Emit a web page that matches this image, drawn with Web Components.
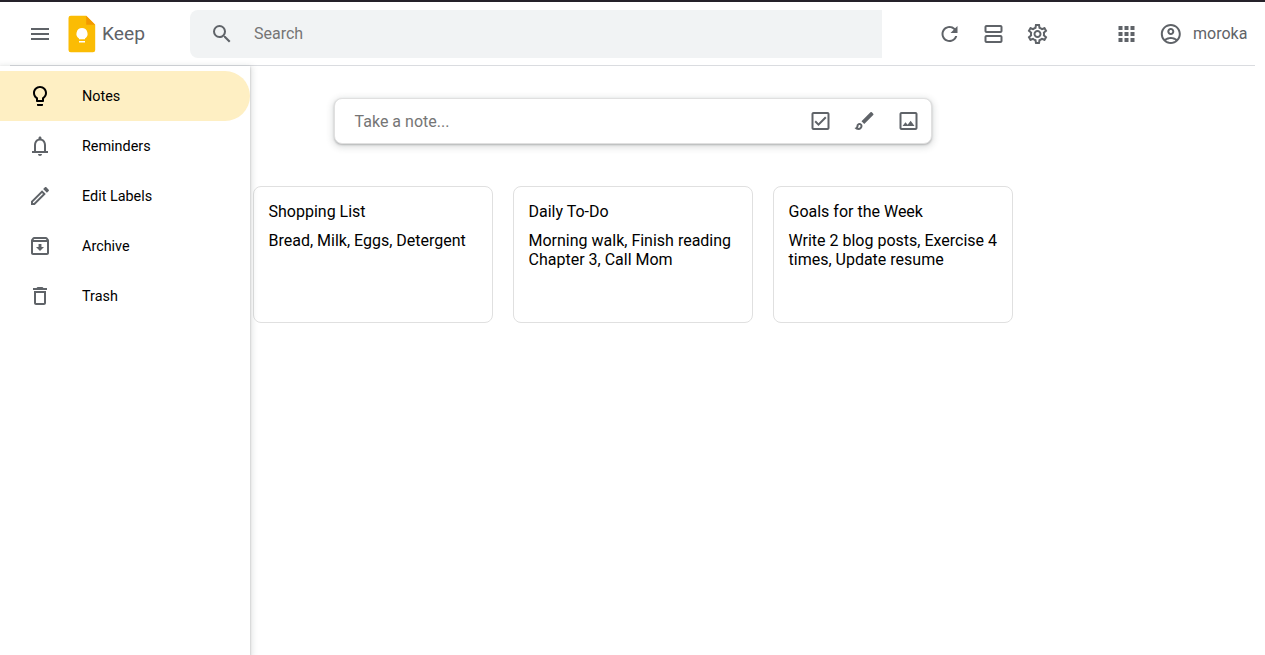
<!DOCTYPE html>
<html lang="en">
<head>
<meta charset="utf-8">
<title>Keep</title>
<style>
html,body{margin:0;height:100%;overflow:hidden;background:#fff;font-family:Roboto,sans-serif;color:#000}
</style>
</head>
<body>
<keep-app></keep-app>
<script>
const box = 'M19 3H5c-1.1 0-2 .9-2 2v14c0 1.1.9 2 2 2h14c1.1 0 2-.9 2-2V5c0-1.1-.9-2-2-2zm0 16H5V5h14v14z';
const ICONS = {
  menu: 'M3 18h18v-2H3v2zm0-5h18v-2H3v2zm0-7v2h18V6H3z',
  search: 'M15.5 14h-.79l-.28-.27A6.47 6.47 0 0 0 16 9.5 6.5 6.5 0 1 0 9.5 16c1.61 0 3.09-.59 4.23-1.57l.27.28v.79l5 4.99L20.49 19l-4.99-5zm-6 0C7.01 14 5 11.99 5 9.5S7.01 5 9.5 5 14 7.01 14 9.5 11.99 14 9.5 14z',
  refresh: 'M17.65 6.35A7.958 7.958 0 0 0 12 4c-4.42 0-7.99 3.58-7.99 8s3.57 8 7.99 8c3.73 0 6.84-2.55 7.73-6h-2.08A5.99 5.99 0 0 1 12 18c-3.31 0-6-2.69-6-6s2.69-6 6-6c1.66 0 3.14.69 4.22 1.78L13 11h7V4l-2.35 2.35z',
  agenda: 'M19 13H5c-1.1 0-2 .9-2 2v4c0 1.1.9 2 2 2h14c1.1 0 2-.9 2-2v-4c0-1.1-.9-2-2-2zm0 6H5v-4h14v4zm0-16H5c-1.1 0-2 .9-2 2v4c0 1.1.9 2 2 2h14c1.1 0 2-.9 2-2V5c0-1.1-.9-2-2-2zm0 6H5V5h14v4z',
  settings: 'M19.43 12.98c.04-.32.07-.64.07-.98 0-.34-.03-.66-.07-.98l2.11-1.65c.19-.15.24-.42.12-.64l-2-3.46c-.09-.16-.26-.25-.44-.25-.06 0-.12.01-.17.03l-2.49 1c-.52-.4-1.08-.73-1.69-.98l-.38-2.65C14.46 2.18 14.25 2 14 2h-4c-.25 0-.46.18-.49.42l-.38 2.65c-.61.25-1.17.59-1.69.98l-2.49-1c-.06-.02-.12-.03-.18-.03-.17 0-.34.09-.43.25l-2 3.46c-.13.22-.07.49.12.64l2.11 1.65c-.04.32-.07.65-.07.98 0 .33.03.66.07.98l-2.11 1.65c-.19.15-.24.42-.12.64l2 3.46c.09.16.26.25.44.25.06 0 .12-.01.17-.03l2.49-1c.52.4 1.08.73 1.69.98l.38 2.65c.03.24.24.42.49.42h4c.25 0 .46-.18.49-.42l.38-2.65c.61-.25 1.17-.59 1.69-.98l2.49 1c.06.02.12.03.18.03.17 0 .34-.09.43-.25l2-3.46c.12-.22.07-.49-.12-.64l-2.11-1.65zm-1.98-1.71c.04.31.05.52.05.73 0 .21-.02.43-.05.73l-.14 1.13.89.7 1.08.84-.7 1.21-1.27-.51-1.04-.42-.9.68c-.43.32-.84.56-1.25.73l-1.06.43-.16 1.13-.2 1.35h-1.4l-.19-1.35-.16-1.13-1.06-.43c-.43-.18-.83-.41-1.23-.71l-.91-.7-1.06.43-1.27.51-.7-1.21 1.08-.84.89-.7-.14-1.13c-.03-.31-.05-.54-.05-.74s.02-.43.05-.73l.14-1.13-.89-.7-1.08-.84.7-1.21 1.27.51 1.04.42.9-.68c.43-.32.84-.56 1.25-.73l1.06-.43.16-1.13.2-1.35h1.39l.19 1.35.16 1.13 1.06.43c.43.18.83.41 1.23.71l.91.7 1.06-.43 1.27-.51.7 1.21-1.07.85-.89.7.14 1.13zM12 8c-2.21 0-4 1.79-4 4s1.79 4 4 4 4-1.79 4-4-1.79-4-4-4zm0 6c-1.1 0-2-.9-2-2s.9-2 2-2 2 .9 2 2-.9 2-2 2z',
  apps: 'M4 8h4V4H4v4zm6 12h4v-4h-4v4zm-6 0h4v-4H4v4zm0-6h4v-4H4v4zm6 0h4v-4h-4v4zm6-10v4h4V4h-4zm-6 4h4V4h-4v4zm6 6h4v-4h-4v4zm0 6h4v-4h-4v4z',
  account: 'M12 2C6.48 2 2 6.48 2 12s4.48 10 10 10 10-4.48 10-10S17.52 2 12 2zM7.35 18.5C8.66 17.56 10.26 17 12 17s3.34.56 4.65 1.5C15.34 19.44 13.74 20 12 20s-3.34-.56-4.65-1.5zm10.79-1.38C16.45 15.8 14.32 15 12 15s-4.45.8-6.14 2.12A7.96 7.96 0 0 1 4 12c0-4.42 3.58-8 8-8s8 3.58 8 8c0 1.95-.7 3.73-1.86 5.12zM12 6c-1.93 0-3.5 1.57-3.5 3.5S10.07 13 12 13s3.5-1.57 3.5-3.5S13.93 6 12 6zm0 5c-.83 0-1.5-.67-1.5-1.5S11.17 8 12 8s1.5.67 1.5 1.5S12.83 11 12 11z',
  bulb: 'M9 21c0 .5.4 1 1 1h4c.6 0 1-.5 1-1v-1H9v1zm3-19C8.1 2 5 5.1 5 9c0 2.4 1.2 4.5 3 5.7V17c0 .5.4 1 1 1h6c.6 0 1-.5 1-1v-2.3c1.8-1.3 3-3.4 3-5.7 0-3.9-3.1-7-7-7zm2.9 11.1l-.9.6V16h-4v-2.3l-.9-.6C7.8 12.2 7 10.6 7 9c0-2.8 2.2-5 5-5s5 2.2 5 5c0 1.6-.8 3.2-2.1 4.1z',
  bell: 'M18 17v-6c0-3.07-1.63-5.64-4.5-6.32V4c0-.83-.67-1.5-1.5-1.5s-1.5.67-1.5 1.5v.68C7.64 5.36 6 7.92 6 11v6H4v2h16v-2h-2zm-2 0H8v-6c0-2.48 1.51-4.5 4-4.5s4 2.02 4 4.5v6zm-4 5c1.1 0 2-.9 2-2h-4c0 1.1.9 2 2 2z',
  pencil: 'M14.06 9.02l.92.92L5.92 19H5v-.92l9.06-9.06M17.66 3c-.25 0-.51.1-.7.29l-1.83 1.83 3.75 3.75 1.83-1.83c.39-.39.39-1.02 0-1.41l-2.34-2.34c-.2-.2-.45-.29-.71-.29zm-3.6 3.19L3 17.25V21h3.75L17.81 9.94l-3.75-3.75z',
  archive: 'M20.54 5.23l-1.39-1.68C18.88 3.21 18.47 3 18 3H6c-.47 0-.88.21-1.16.55L3.46 5.23C3.17 5.57 3 6.02 3 6.5V19c0 1.1.89 2 2 2h14c1.1 0 2-.9 2-2V6.5c0-.48-.17-.93-.46-1.27zM6.24 5h11.52l.83 1H5.42l.82-1zM5 19V8h14v11H5zm8.45-9h-2.9v3H8l4 4 4-4h-2.55z',
  trash: 'M6 19c0 1.1.9 2 2 2h8c1.1 0 2-.9 2-2V7H6v12zM8 9h8v10H8V9zm7.5-5l-1-1h-5l-1 1H5v2h14V4z',
  check: box + 'M17.99 9l-1.41-1.42-6.59 6.59-2.58-2.57-1.42 1.41 4 3.99z',
  brush: 'M20.71 4.63l-1.34-1.34a1 1 0 0 0-1.41 0L9 12.25 11.75 15l8.96-8.96a1 1 0 0 0 0-1.41zM7 14c-1.66 0-3 1.34-3 3 0 1.31-1.16 2-2 2 .92 1.22 2.49 2 4 2 2.21 0 4-1.79 4-4 0-1.66-1.34-3-3-3zm-1 5c-.17 0-.33-.02-.5-.05.31-.55.5-1.21.5-1.95 0-.55.45-1 1-1s1 .45 1 1c0 1.1-.9 2-2 2z',
  image: box + 'M14.14 11.86l-3 3.87L9 13.14 6 17h12z'
};

function define(name, html) {
  customElements.define(name, class extends HTMLElement {
    constructor() {
      super();
      const t = document.createElement('template');
      t.innerHTML = html;
      this.attachShadow({mode: 'open'}).append(t.content.cloneNode(true));
    }
  });
}

/* nudge: optional sub-pixel horizontal shift of the glyph inside its box */
customElements.define('keep-icon', class extends HTMLElement {
  connectedCallback() {
    if (this.shadowRoot) return;
    this.attachShadow({mode: 'open'}).innerHTML =
      `<style>:host{display:block;flex:none;width:24px;height:24px;color:#5f6368}svg{display:block}</style>
       <svg width="24" height="24" viewBox="0 0 24 24" fill="currentColor"><path transform="translate(${this.getAttribute('nudge') || 0} 0)" d="${ICONS[this.getAttribute('name')]}"/></svg>`;
  }
});

define('keep-logo', `<style>
:host{display:flex;align-items:center;color:#5f6368;font-size:19.2px}
svg{display:block;margin-right:6px}
</style>
<svg width="28" height="38" viewBox="0 0 28 38">
<path fill="#fbbc04" d="M2.8.8H18.2L27.2 9.8V35a2.3 2.3 0 0 1-2.3 2.3H2.8A2.3 2.3 0 0 1 .5 35V3.1A2.3 2.3 0 0 1 2.8.8z"/>
<path fill="#f29900" d="M18.2.8l9 9h-9z"/>
<path fill="#fff" d="M14 13.1a5.6 5.6 0 0 0-3 10.3v.9h6v-.9a5.6 5.6 0 0 0-3-10.3zM11 25.9h6v1.7h-6z"/>
</svg><slot></slot>`);

define('keep-search', `<style>
:host{display:flex;align-items:center;box-sizing:border-box;width:692px;height:48px;padding-left:20px;gap:20px;background:#f1f3f4;border-radius:8px 0 0 8px;font-size:16px;color:#757575}
</style><keep-icon name="search"></keep-icon><slot></slot>`);

define('keep-header', `<style>
:host{display:flex;align-items:center;box-sizing:border-box;height:64px;margin:0 10px;padding-left:18px;border-bottom:1px solid #dadce0}
keep-logo{width:122px;margin-left:16px}
.tools{display:flex;gap:20px;margin-left:56px}
.account{display:flex;align-items:center;margin-left:65px;color:#5f6368;font-size:16px}
.account span{margin-left:10px}
.account keep-icon+keep-icon{margin-left:20px}
</style>
<keep-icon name="menu"></keep-icon>
<keep-logo>Keep</keep-logo>
<keep-search>Search</keep-search>
<div class="tools"><keep-icon name="refresh" nudge="-.5"></keep-icon><keep-icon name="agenda" nudge="-.5"></keep-icon><keep-icon name="settings" nudge="-.5"></keep-icon></div>
<div class="account"><keep-icon name="apps" nudge="-.5"></keep-icon><keep-icon name="account" nudge="-.2"></keep-icon><span>moroka</span></div>`);

customElements.define('keep-nav-item', class extends HTMLElement {
  connectedCallback() {
    if (this.shadowRoot) return;
    this.attachShadow({mode: 'open'}).innerHTML = `<style>
:host{display:flex;align-items:center;height:50px;padding-left:28px;gap:30px;font-size:14.4px;border-radius:0 25px 25px 0}
:host([active]){background:#feefc3}
:host([active]) keep-icon{color:#000}
</style><keep-icon name="${this.getAttribute('icon')}"></keep-icon><slot></slot>`;
  }
});

define('keep-sidebar', `<style>
:host{display:block;box-sizing:border-box;width:250px;flex:none;padding-top:5px;background:#fff;box-shadow:0 1px 2px 0 rgba(60,64,67,.3),0 2px 6px 2px rgba(60,64,67,.15);position:relative}
</style><slot></slot>`);

define('keep-composer', `<style>
:host{display:flex;align-items:center;box-sizing:border-box;width:598px;height:46px;padding:0 11px 0 19.6px;border:1px solid #e0e0e0;border-radius:8px;background:#fff;font-size:16px;color:#757575;box-shadow:0 1px 2px 0 rgba(60,64,67,.3),0 2px 6px 2px rgba(60,64,67,.15)}
.text{flex:1}.tools{display:flex;gap:20px}
</style><div class="text"><slot></slot></div>
<div class="tools"><keep-icon name="check" nudge=".5"></keep-icon><keep-icon name="brush" nudge=".5"></keep-icon><keep-icon name="image" nudge=".5"></keep-icon></div>`);

define('keep-note', `<style>
:host{display:block;box-sizing:border-box;width:240px;height:137px;padding:15px 14.5px;border:1px solid #e0e0e0;border-radius:8px;font-size:16px;line-height:19px}
.title{margin-bottom:10px}
</style><div class="title"><slot name="title"></slot></div><div><slot></slot></div>`);

define('keep-app', `<style>
:host{display:flex;flex-direction:column;box-sizing:border-box;height:100vh;border-top:2px solid #25222a}
.body{display:flex;flex:1;min-height:0}
main{flex:1;min-width:0;padding-top:32px}
keep-composer{margin-left:84px}
.notes{display:flex;gap:20px;margin:42px 0 0 3px}
</style>
<keep-header></keep-header>
<div class="body">
<keep-sidebar>
<keep-nav-item icon="bulb" active>Notes</keep-nav-item>
<keep-nav-item icon="bell">Reminders</keep-nav-item>
<keep-nav-item icon="pencil">Edit Labels</keep-nav-item>
<keep-nav-item icon="archive">Archive</keep-nav-item>
<keep-nav-item icon="trash">Trash</keep-nav-item>
</keep-sidebar>
<main>
<keep-composer>Take a note...</keep-composer>
<div class="notes">
<keep-note><span slot="title">Shopping List</span>Bread, Milk, Eggs, Detergent</keep-note>
<keep-note><span slot="title">Daily To-Do</span>Morning walk, Finish reading Chapter 3, Call Mom</keep-note>
<keep-note><span slot="title">Goals for the Week</span>Write 2 blog posts, Exercise 4 times, Update resume</keep-note>
</div>
</main>
</div>`);
</script>
</body>
</html>
